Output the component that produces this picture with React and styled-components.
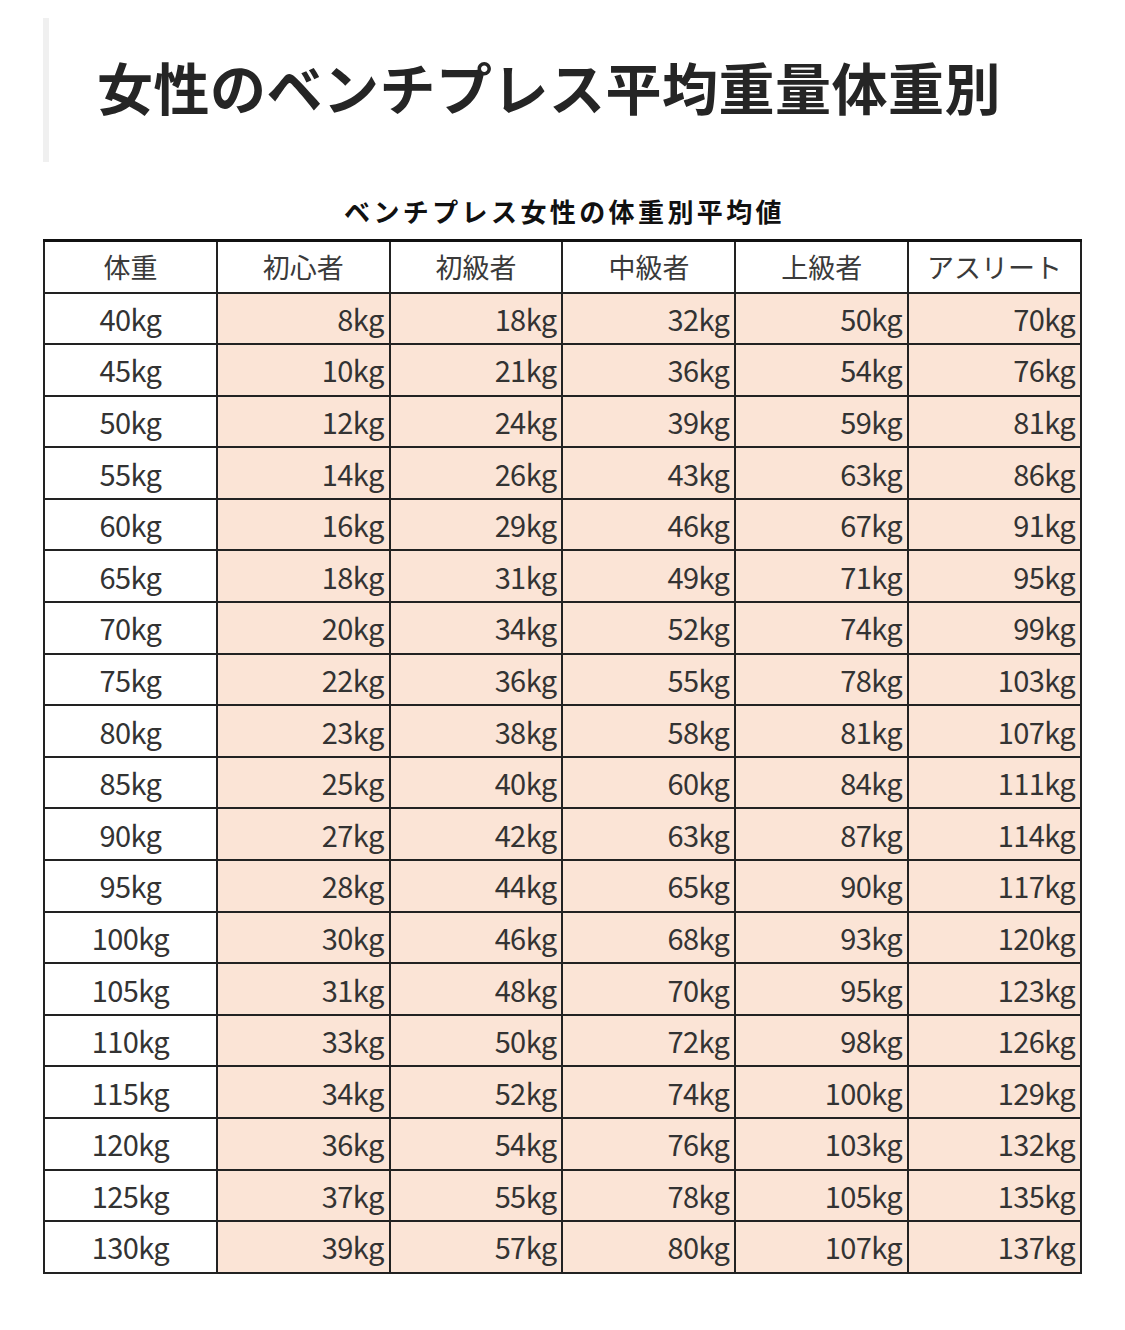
import React from "react";
import styled, { createGlobalStyle } from "styled-components";

const Global = createGlobalStyle`
  html, body { margin: 0; padding: 0; background: #ffffff; }
  body { font-family: "Noto Sans CJK JP", "Noto Sans", sans-serif; color: #222; }
`;

const Page = styled.div`
  width: 1125px;
  min-height: 1330px;
  padding-top: 18px;
  box-sizing: border-box;
`;

const HeadingBlock = styled.div`
  margin-left: 43px;
  height: 144px;
  border-left: 6px solid #f0f0f0;
  padding-left: 48px;
  display: flex;
  align-items: center;
  box-sizing: border-box;
`;

const Title = styled.h2`
  margin: 0 0 9px 0;
  font-family: "Noto Sans CJK JP", "Noto Sans", sans-serif;
  font-size: 56px;
  font-weight: 700;
  color: #252525;
  line-height: 1.2;
  letter-spacing: 0.5px;
`;

const Figure = styled.div`
  margin: 33px 0 0 43px;
  width: 1039px;
`;

const Caption = styled.div`
  text-align: center;
  font-family: "Noto Sans CJK JP", sans-serif;
  font-size: 26px;
  font-weight: 700;
  letter-spacing: 3.4px;
  color: #111;
  line-height: 32px;
  height: 44px;
  padding-left: 4px;
`;

const Table = styled.table`
  width: 1039px;
  border-collapse: collapse;
  table-layout: fixed;
  border-top: 3px solid #111;
  border-left: 2px solid #111;
  border-right: 2px solid #111;
  border-bottom: 2px solid #111;
`;

const Row = styled.tr`
  height: ${(p) => (p.$head ? "52px" : "51.6px")};
`;

const Cell = styled.td`
  border: 2px solid #222;
  padding: 0 5px 0 5px;
  box-sizing: border-box;
  background: ${(p) => (p.$shade ? "#fbe4d6" : "#ffffff")};
  text-align: ${(p) => p.$align};
  vertical-align: middle;
  font-family: "Noto Sans CJK JP", sans-serif;
  font-size: ${(p) => (p.$head ? "27px" : "29px")};
  font-weight: 400;
  color: ${(p) => (p.$head ? "#3a3a3a" : "#333333")};
  line-height: 1;
  white-space: nowrap;
  overflow: hidden;
`;

const Num = styled.span`
  display: inline-block;
  letter-spacing: -0.6px;
`;

const headers = ["体重", "初心者", "初級者", "中級者", "上級者", "アスリート"];

const data = [
  [40, 8, 18, 32, 50, 70],
  [45, 10, 21, 36, 54, 76],
  [50, 12, 24, 39, 59, 81],
  [55, 14, 26, 43, 63, 86],
  [60, 16, 29, 46, 67, 91],
  [65, 18, 31, 49, 71, 95],
  [70, 20, 34, 52, 74, 99],
  [75, 22, 36, 55, 78, 103],
  [80, 23, 38, 58, 81, 107],
  [85, 25, 40, 60, 84, 111],
  [90, 27, 42, 63, 87, 114],
  [95, 28, 44, 65, 90, 117],
  [100, 30, 46, 68, 93, 120],
  [105, 31, 48, 70, 95, 123],
  [110, 33, 50, 72, 98, 126],
  [115, 34, 52, 74, 100, 129],
  [120, 36, 54, 76, 103, 132],
  [125, 37, 55, 78, 105, 135],
  [130, 39, 57, 80, 107, 137],
];

export default function App() {
  return (
    <Page>
      <Global />
      <HeadingBlock>
        <Title>女性のベンチプレス平均重量体重別</Title>
      </HeadingBlock>
      <Figure>
        <Caption>ベンチプレス女性の体重別平均値</Caption>
        <Table>
          <tbody>
            <Row $head>
              {headers.map((h) => (
                <Cell key={h} $head $align="center">
                  {h}
                </Cell>
              ))}
            </Row>
            {data.map((row) => (
              <Row key={row[0]}>
                {row.map((v, i) => (
                  <Cell key={i} $shade={i > 0} $align={i === 0 ? "center" : "right"}>
                    <Num>{v}kg</Num>
                  </Cell>
                ))}
              </Row>
            ))}
          </tbody>
        </Table>
      </Figure>
    </Page>
  );
}
